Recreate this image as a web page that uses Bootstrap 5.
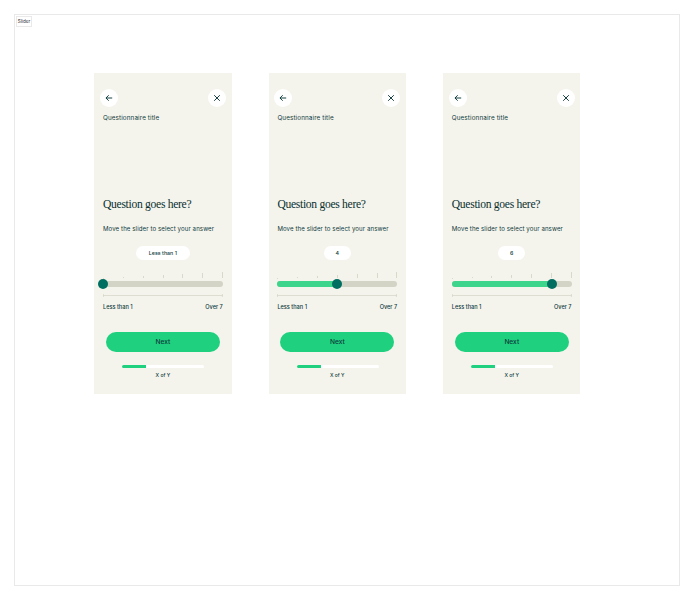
<!DOCTYPE html>
<html lang="en"><head><meta charset="utf-8"><title>Slider</title>
<link rel="stylesheet" href="https://cdn.jsdelivr.net/npm/bootstrap@5.3.0/dist/css/bootstrap.min.css">
<style>
html,body{height:100%;background:#fff}
body{font-family:Inter,"Liberation Sans",sans-serif;color:#0c3a3c;padding:14px 14px 14px 14px;overflow:hidden}
.art-frame{position:relative;width:666px;height:572px;border:1px solid #e9e9e9;padding-top:58px;padding-left:79.2px;gap:37px}
.frame-tag{position:absolute;left:1px;top:1px;width:16px;height:11px;border:1px solid #e9e9e9;font-size:4.6px;line-height:9px;text-align:center;color:#333}
.phone{width:137.4px;height:321px;background:#f5f4ec;flex:none;padding:16px 8.8px 0}
.round-btn{width:18px;height:18px;border-radius:50%;background:#fff;padding:0;border:0;margin:0 -3px}
.round-btn svg{width:8px;height:8px;display:block}
.q-kicker{font-size:6.3px;line-height:8px;margin-top:7px;letter-spacing:.02em}
.q-title{font-family:"Liberation Serif",serif;font-weight:400;font-size:11.6px;line-height:14px;margin:76px 0 0;letter-spacing:-.3px;color:#08302f}
.q-help{font-size:6.1px;line-height:8px;margin-top:13.3px;letter-spacing:.015em}
.val-pill{background:#fff;border-radius:7px;height:14px;font-size:5.3px;line-height:14px;font-weight:500;padding:0;margin:13px auto 0;text-align:center}
.ticks{height:6px;margin-top:12px;align-items:flex-end}
.ticks span{width:.7px;background:#d8d9ca}
.slide-wrap{position:relative;height:6px;margin-top:3px}
.slide-track{height:6px;border-radius:3px;background:#d3d4c5;overflow:hidden}
.slide-fill{height:100%;background:#3dd58b}
.slide-thumb{position:absolute;top:-2px;width:10px;height:10px;border-radius:50%;background:#006e60;transform:translateX(-50%)}
.range-arrow{display:block;width:100%;height:5px;margin-top:5.8px}
.range-labels{font-size:5.6px;line-height:8px;font-weight:500;margin-top:4.7px}
.next-btn{display:block;width:114px;height:20px;margin:21px 0 0 3px;background:#1fd17f;border:0;border-radius:10px;padding:0;font-size:6.6px;line-height:20px;color:#0c3a3c;font-weight:500}
.next-btn:hover{background:#1fd17f;color:#0c3a3c}
.step-bar{width:82px;height:3px;background:#fff;margin:12.8px 0 0 19.3px;border-radius:1.5px;overflow:hidden;display:block}
.step-fill{display:block;width:24px;height:100%;background:#1fd17f}
.step-text{font-size:5px;line-height:7px;text-align:center;margin-top:4px;font-weight:500}
</style></head>
<body>
<div class="art-frame d-flex align-items-start">
<div class="frame-tag">Slider</div>

<section class="phone">
<div class="d-flex justify-content-between">
<button class="btn round-btn d-flex align-items-center justify-content-center" aria-label="Back"><svg viewBox="0 0 10 10" fill="none" stroke="#0c3a3c" stroke-width="1.2"><path d="M9 5H1.2M4.6 1.6 1.2 5l3.4 3.4"/></svg></button>
<button class="btn round-btn d-flex align-items-center justify-content-center" aria-label="Close"><svg viewBox="0 0 10 10" fill="none" stroke="#0c3a3c" stroke-width="1.2"><path d="M1.5 1.5l7 7M8.5 1.5l-7 7"/></svg></button>
</div>
<div class="q-kicker">Questionnaire title</div>
<h2 class="q-title">Question goes here?</h2>
<div class="q-help">Move the slider to select your answer</div>
<div class="val-pill" style="width:54px">Less than 1</div>
<div class="ticks d-flex justify-content-between"><span style="height:.8px"></span><span style="height:1.5px"></span><span style="height:2.5px"></span><span style="height:3.2px"></span><span style="height:4px"></span><span style="height:5px"></span><span style="height:6px"></span></div>
<div class="slide-wrap"><div class="slide-track"><div class="slide-fill" style="width:0%"></div></div><div class="slide-thumb" style="left:0%"></div></div>
<svg class="range-arrow" viewBox="0 0 120 5" preserveAspectRatio="none" fill="none" stroke="#d3d4c5" stroke-width=".7"><path d="M0 2.5H120M.4 1v3M119.6 1v3"/></svg>
<div class="range-labels d-flex justify-content-between"><span>Less than 1</span><span>Over 7</span></div>
<button class="btn next-btn">Next</button>
<span class="step-bar"><span class="step-fill"></span></span>
<div class="step-text">X of Y</div>
</section>

<section class="phone">
<div class="d-flex justify-content-between">
<button class="btn round-btn d-flex align-items-center justify-content-center" aria-label="Back"><svg viewBox="0 0 10 10" fill="none" stroke="#0c3a3c" stroke-width="1.2"><path d="M9 5H1.2M4.6 1.6 1.2 5l3.4 3.4"/></svg></button>
<button class="btn round-btn d-flex align-items-center justify-content-center" aria-label="Close"><svg viewBox="0 0 10 10" fill="none" stroke="#0c3a3c" stroke-width="1.2"><path d="M1.5 1.5l7 7M8.5 1.5l-7 7"/></svg></button>
</div>
<div class="q-kicker">Questionnaire title</div>
<h2 class="q-title">Question goes here?</h2>
<div class="q-help">Move the slider to select your answer</div>
<div class="val-pill" style="width:27px">4</div>
<div class="ticks d-flex justify-content-between"><span style="height:.8px"></span><span style="height:1.5px"></span><span style="height:2.5px"></span><span style="height:3.2px"></span><span style="height:4px"></span><span style="height:5px"></span><span style="height:6px"></span></div>
<div class="slide-wrap"><div class="slide-track"><div class="slide-fill" style="width:50%"></div></div><div class="slide-thumb" style="left:50%"></div></div>
<svg class="range-arrow" viewBox="0 0 120 5" preserveAspectRatio="none" fill="none" stroke="#d3d4c5" stroke-width=".7"><path d="M0 2.5H120M.4 1v3M119.6 1v3"/></svg>
<div class="range-labels d-flex justify-content-between"><span>Less than 1</span><span>Over 7</span></div>
<button class="btn next-btn">Next</button>
<span class="step-bar"><span class="step-fill"></span></span>
<div class="step-text">X of Y</div>
</section>

<section class="phone">
<div class="d-flex justify-content-between">
<button class="btn round-btn d-flex align-items-center justify-content-center" aria-label="Back"><svg viewBox="0 0 10 10" fill="none" stroke="#0c3a3c" stroke-width="1.2"><path d="M9 5H1.2M4.6 1.6 1.2 5l3.4 3.4"/></svg></button>
<button class="btn round-btn d-flex align-items-center justify-content-center" aria-label="Close"><svg viewBox="0 0 10 10" fill="none" stroke="#0c3a3c" stroke-width="1.2"><path d="M1.5 1.5l7 7M8.5 1.5l-7 7"/></svg></button>
</div>
<div class="q-kicker">Questionnaire title</div>
<h2 class="q-title">Question goes here?</h2>
<div class="q-help">Move the slider to select your answer</div>
<div class="val-pill" style="width:27px">6</div>
<div class="ticks d-flex justify-content-between"><span style="height:.8px"></span><span style="height:1.5px"></span><span style="height:2.5px"></span><span style="height:3.2px"></span><span style="height:4px"></span><span style="height:5px"></span><span style="height:6px"></span></div>
<div class="slide-wrap"><div class="slide-track"><div class="slide-fill" style="width:83.3%"></div></div><div class="slide-thumb" style="left:83.3%"></div></div>
<svg class="range-arrow" viewBox="0 0 120 5" preserveAspectRatio="none" fill="none" stroke="#d3d4c5" stroke-width=".7"><path d="M0 2.5H120M.4 1v3M119.6 1v3"/></svg>
<div class="range-labels d-flex justify-content-between"><span>Less than 1</span><span>Over 7</span></div>
<button class="btn next-btn">Next</button>
<span class="step-bar"><span class="step-fill"></span></span>
<div class="step-text">X of Y</div>
</section>
</div>
<script src="https://cdn.jsdelivr.net/npm/bootstrap@5.3.0/dist/js/bootstrap.bundle.min.js"></script>
</body></html>
